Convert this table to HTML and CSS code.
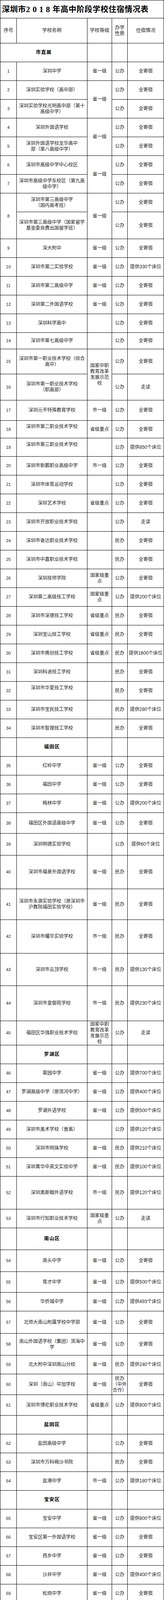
FILE: index.html
```html
<!DOCTYPE html>
<html lang="zh-CN">
<head>
<meta charset="utf-8">
<meta name="viewport" content="width=device-width, initial-scale=1">
<title>深圳市2018年高中阶段学校住宿情况表</title>
<link rel="stylesheet" href="styles.css">
</head>
<body>
<table class="sheet">
<colgroup><col class="c0"><col class="c1"><col class="c2"><col class="c3"><col class="c4"></colgroup>
<tbody>
<tr class="title h46"><td colspan="5">深圳市<span class="yr">2018</span>年高中阶段学校住宿情况表</td></tr>
<tr class="hd h64"><td>序号</td><td>学校名称</td><td>学校等级</td><td class="tp">办学<br>性质</td><td class="ac">住宿情况</td></tr>
<tr class="sec"><td colspan="2">市直属</td><td></td><td></td><td></td></tr>
<tr><td class="n">1</td><td>深圳中学</td><td>省一级</td><td class="tp">公办</td><td class="ac">全寄宿</td></tr>
<tr><td class="n">2</td><td>深圳实验学校（高中部）</td><td rowspan="2">省一级</td><td class="tp">公办</td><td class="ac">全寄宿</td></tr>
<tr><td class="n">3</td><td>深圳实验学校光明高中部（第十<br>高级中学）</td><td class="tp">公办</td><td class="ac">全寄宿</td></tr>
<tr><td class="n">4</td><td>深圳外国语学校</td><td rowspan="2">省一级</td><td class="tp">公办</td><td class="ac">全寄宿</td></tr>
<tr><td class="n">5</td><td>深圳外国语学校龙华高中<br>部（第八高级中学）</td><td class="tp">公办</td><td class="ac">全寄宿</td></tr>
<tr><td class="n">6</td><td>深圳市高级中学中心校区</td><td rowspan="2">省一级</td><td class="tp">公办</td><td class="ac">全寄宿</td></tr>
<tr><td class="n">7</td><td>深圳市高级中学东校区（第九高<br>级中学）</td><td class="tp">公办</td><td class="ac">全寄宿</td></tr>
<tr><td class="n" rowspan="2">8</td><td>深圳市第三高级中学<br>（国内高考班）</td><td rowspan="2">省一级</td><td class="tp">公办</td><td class="ac">全寄宿</td></tr>
<tr class="h69"><td>深圳市第三高级中学（国家留学<br>基金委自费出国留学班）</td><td class="tp">公办</td><td class="ac">全寄宿</td></tr>
<tr><td class="n">9</td><td>深大附中</td><td>省一级</td><td class="tp">公办</td><td class="ac">全寄宿</td></tr>
<tr><td class="n">10</td><td>深圳市第二实验学校</td><td>省一级</td><td class="tp">公办</td><td class="ac">提供330个床位</td></tr>
<tr><td class="n">11</td><td>深圳市第二高级中学</td><td>省一级</td><td class="tp">公办</td><td class="ac">全寄宿</td></tr>
<tr><td class="n">12</td><td>深圳第二外国语学校</td><td>省一级</td><td class="tp">公办</td><td class="ac">全寄宿</td></tr>
<tr><td class="n">13</td><td>深圳科学高中</td><td></td><td class="tp">公办</td><td class="ac">全寄宿</td></tr>
<tr class="h42"><td class="n">14</td><td>深圳市第七高级中学</td><td></td><td class="tp">公办</td><td class="ac">全寄宿</td></tr>
<tr class="h64"><td class="n">15</td><td>深圳市第一职业技术学校（综合<br>高中）</td><td rowspan="2">国家中职教育改革发展示范校</td><td class="tp">公办</td><td class="ac">全寄宿</td></tr>
<tr class="h67"><td class="n">16</td><td>深圳市第一职业技术学校<br>（职高部）</td><td class="tp">公办</td><td class="ac">走读</td></tr>
<tr class="h52"><td class="n">17</td><td>深圳元平特殊教育学校</td><td>市一级</td><td class="tp">公办</td><td class="ac">全寄宿</td></tr>
<tr class="h45"><td class="n">18</td><td class="up">深圳市第二职业技术学校</td><td>省级重点</td><td class="tp">公办</td><td class="ac">全寄宿</td></tr>
<tr class="h47"><td class="n">19</td><td class="up">深圳市第三职业技术学校</td><td></td><td class="tp">公办</td><td class="ac">提供850个床位</td></tr>
<tr><td class="n">20</td><td>深圳市新鹏职业高级中学</td><td>市一级</td><td class="tp">公办</td><td class="ac">全寄宿</td></tr>
<tr><td class="n">21</td><td>深圳市体育运动学校</td><td></td><td class="tp">公办</td><td class="ac">全寄宿</td></tr>
<tr><td class="n">22</td><td>深圳艺术学校</td><td>省级重点</td><td class="tp">公办</td><td class="ac">全寄宿</td></tr>
<tr><td class="n">23</td><td>深圳市开放职业技术学校</td><td></td><td class="tp">公办</td><td class="ac">走读</td></tr>
<tr><td class="n">24</td><td>深圳市奋达职业技术学校</td><td></td><td class="tp">民办</td><td class="ac">全寄宿</td></tr>
<tr><td class="n">25</td><td>深圳市中嘉职业技术学校</td><td></td><td class="tp">民办</td><td class="ac">全寄宿</td></tr>
<tr><td class="n">26</td><td>深圳技师学院</td><td>国家级重点</td><td class="tp">公办</td><td class="ac">全寄宿</td></tr>
<tr><td class="n">27</td><td>深圳第二高级技工学校</td><td>国家级重点</td><td class="tp">公办</td><td class="ac">提供200个床位</td></tr>
<tr><td class="n">28</td><td>深圳市深德技工学校</td><td>省级重点</td><td class="tp">民办</td><td class="ac">全寄宿</td></tr>
<tr><td class="n">29</td><td>深圳宝山技工学校</td><td>省级重点</td><td class="tp">民办</td><td class="ac">全寄宿</td></tr>
<tr><td class="n">30</td><td>深圳市携创技工学校</td><td>省级重点</td><td class="tp">民办</td><td class="ac">提供1600个床位</td></tr>
<tr><td class="n">31</td><td>深圳科迪技工学校</td><td></td><td class="tp">民办</td><td class="ac">全寄宿</td></tr>
<tr><td class="n">32</td><td class="up">深圳市华夏技工学校</td><td></td><td class="tp">民办</td><td class="ac">全寄宿</td></tr>
<tr><td class="n">33</td><td>深圳市宝民技工学校</td><td></td><td class="tp">民办</td><td class="ac">提供280个床位</td></tr>
<tr><td class="n">34</td><td>深圳市智理技工学校</td><td></td><td class="tp">民办</td><td class="ac">全寄宿</td></tr>
<tr class="sec"><td></td><td>福田区</td><td></td><td></td><td></td></tr>
<tr><td class="n">35</td><td>红岭中学</td><td>省一级</td><td class="tp">公办</td><td class="ac">全寄宿</td></tr>
<tr><td class="n">36</td><td>福田中学</td><td>省一级</td><td class="tp">公办</td><td class="ac">全寄宿</td></tr>
<tr><td class="n">37</td><td>梅林中学</td><td>省一级</td><td class="tp">公办</td><td class="ac">提供200个床位</td></tr>
<tr class="h53"><td class="n">38</td><td>福田区外国语高级中学</td><td>省一级</td><td class="tp">公办</td><td class="ac">全寄宿</td></tr>
<tr class="h56"><td class="n">39</td><td>深圳明德实验学校</td><td></td><td class="tp">公办</td><td class="ac">提供60个床位</td></tr>
<tr class="h86"><td class="n">40</td><td>深圳市福景外国语学校</td><td>省一级</td><td class="tp">民办</td><td class="ac">全寄宿</td></tr>
<tr class="h79"><td class="n">41</td><td>深圳市永源实验学校（原深圳市<br>沪教院福田实验学校）</td><td>省一级</td><td class="tp">民办</td><td class="ac">全寄宿</td></tr>
<tr class="h86"><td class="n">42</td><td>深圳市耀华实验学校</td><td>市一级</td><td class="tp">民办</td><td class="ac">全寄宿</td></tr>
<tr class="h83"><td class="n">43</td><td>深圳市云顶学校</td><td>市一级</td><td class="tp">民办</td><td class="ac">提供130个床位</td></tr>
<tr class="h90"><td class="n">44</td><td>深圳市皇御苑学校</td><td>市一级</td><td class="tp">民办</td><td class="ac">提供230个床位</td></tr>
<tr class="h62"><td class="n">45</td><td>福田区华强职业技术学校</td><td>国家中职教育改革发展示范校</td><td class="tp">公办</td><td class="ac">走读</td></tr>
<tr class="sec"><td></td><td>罗湖区</td><td></td><td></td><td></td></tr>
<tr><td class="n">46</td><td>翠园中学</td><td>省一级</td><td class="tp">公办</td><td class="ac">提供700个床位</td></tr>
<tr><td class="n">47</td><td>罗湖高级中学（原滨河中学）</td><td>省一级</td><td class="tp">公办</td><td class="ac">提供400个床位</td></tr>
<tr><td class="n">48</td><td>罗湖外语学校</td><td>省一级</td><td class="tp">公办</td><td class="ac">提供500个床位</td></tr>
<tr><td class="n">49</td><td>深圳市美术学校（普高）</td><td></td><td class="tp">公办</td><td class="ac">提供120个床位</td></tr>
<tr><td class="n">50</td><td>深圳市明珠学校</td><td>省一级</td><td class="tp">民办</td><td class="ac">提供210个床位</td></tr>
<tr><td class="n">51</td><td>深圳菁华中英文实验中学</td><td>省一级</td><td class="tp">民办</td><td class="ac">提供100个床位</td></tr>
<tr class="h84"><td class="n">52</td><td>深圳奥斯翰外语学校</td><td>市一级</td><td class="tp">民办</td><td class="ac">提供120个床位</td></tr>
<tr><td class="n">53</td><td>深圳市行知职业技术学校</td><td>国家级重点</td><td class="tp">公办</td><td class="ac">走读</td></tr>
<tr class="sec h56"><td></td><td>南山区</td><td></td><td></td><td></td></tr>
<tr class="h56"><td class="n">54</td><td>南头中学</td><td>省一级</td><td class="tp">公办</td><td class="ac">全寄宿</td></tr>
<tr class="h53"><td class="n">55</td><td>育才中学</td><td>省一级</td><td class="tp">公办</td><td class="ac">提供500个床位</td></tr>
<tr><td class="n">56</td><td>华侨城中学</td><td>省一级</td><td class="tp">公办</td><td class="ac">提供493个床位</td></tr>
<tr class="h57"><td class="n">57</td><td>北师大南山附属学校中学部</td><td>省一级</td><td class="tp">公办</td><td class="ac">全寄宿</td></tr>
<tr class="h56"><td class="n">58</td><td>南山外国语学校（集团）滨海中<br>学</td><td>省一级</td><td class="tp">公办</td><td class="ac">全寄宿</td></tr>
<tr><td class="n">59</td><td>北大附中深圳南山分校</td><td>省一级</td><td class="tp">民办</td><td class="ac">提供240个床位</td></tr>
<tr class="h53"><td class="n">60</td><td>深圳（南山）中加学校</td><td>省一级</td><td class="tp">民办<br>（中外<br>合作）</td><td class="ac">全寄宿</td></tr>
<tr class="h53"><td class="n">61</td><td>深圳市博伦职业技术学校</td><td>省级重点</td><td class="tp">公办</td><td class="ac">提供800个床位</td></tr>
<tr class="sec"><td></td><td>盐田区</td><td></td><td></td><td></td></tr>
<tr><td class="n">62</td><td>盐田高级中学</td><td></td><td class="tp">公办</td><td class="ac">全寄宿</td></tr>
<tr><td class="n">63</td><td>深圳市万科梅沙书院</td><td></td><td class="tp">民办</td><td class="ac">全寄宿</td></tr>
<tr><td class="n">64</td><td>盐港中学</td><td>市一级</td><td class="tp">公办</td><td class="ac">提供180个床位</td></tr>
<tr class="sec"><td></td><td>宝安区</td><td></td><td></td><td></td></tr>
<tr><td class="n">65</td><td>宝安中学</td><td>省一级</td><td class="tp">公办</td><td class="ac">提供800个床位</td></tr>
<tr><td class="n">66</td><td>宝安区第一外国语学校</td><td>省一级</td><td class="tp">公办</td><td class="ac">全寄宿</td></tr>
<tr><td class="n">67</td><td>西乡中学</td><td>省一级</td><td class="tp">公办</td><td class="ac">全寄宿</td></tr>
<tr><td class="n">68</td><td>沙井中学</td><td>省一级</td><td class="tp">公办</td><td class="ac">提供400个床位</td></tr>
<tr><td class="n">69</td><td>松岗中学</td><td>省一级</td><td class="tp">公办</td><td class="ac">全寄宿</td></tr>
<tr><td class="n">70</td><td>新安中学（集团）高中部</td><td>省一级</td><td class="tp">公办</td><td class="ac">提供750个床位</td></tr>
<tr class="h54"><td class="n">71</td><td>深圳市石岩公学（公办班）</td><td rowspan="2">省一级</td><td class="tp">公办</td><td class="ac">提供250个床位</td></tr>
<tr class="h88"><td class="n">72</td><td>深圳市石岩公学（民办班）</td><td class="tp">民办</td><td class="ac">提供200个床位</td></tr>
<tr class="h54"><td class="n">73</td><td>深圳东方英文书院</td><td>省一级</td><td class="tp">民办</td><td class="ac">全寄宿</td></tr>
<tr class="h87"><td class="n">74</td><td>深圳市崛起实验中学</td><td>市一级</td><td class="tp">民办</td><td class="ac">提供100个床位</td></tr>
<tr class="h88"><td class="n">75</td><td>深圳市桃源居中澳实验学校</td><td>省一级</td><td class="tp">民办</td><td class="ac">全寄宿</td></tr>
<tr class="h59"><td class="n">76</td><td>深圳市华胜实验学校</td><td>市一级</td><td class="tp">民办</td><td class="ac">全寄宿</td></tr>
<tr class="h53"><td class="n">77</td><td>深圳市富源学校</td><td>省一级</td><td class="tp">民办</td><td class="ac">全寄宿</td></tr>
<tr><td class="n">78</td><td>深圳市华侨（康桥）书院</td><td>市一级</td><td class="tp">民办</td><td class="ac">全寄宿</td></tr>
<tr><td class="n">79</td><td>深圳市明德外语实验学校</td><td>市一级</td><td class="tp">民办</td><td class="ac">提供250个床位</td></tr>
<tr><td class="n">80</td><td>深圳市宝安区中英公学</td><td></td><td class="tp">民办</td><td class="ac">全寄宿</td></tr>
<tr><td class="n">81</td><td>深圳市松岗中英文实验学校</td><td></td><td class="tp">民办</td><td class="ac">提供400个床位</td></tr>
<tr class="h87"><td class="n">82</td><td>深圳市宝安区翻身实验学校</td><td></td><td class="tp">民办</td><td class="ac">全寄宿</td></tr>
<tr><td class="n">83</td><td>深圳市华一实验学校</td><td></td><td class="tp">民办</td><td class="ac">全寄宿</td></tr>
<tr class="h65"><td class="n">84</td><td>深圳市宝安职业技术学校</td><td>国家中职教育改革发展示范校</td><td class="tp">公办</td><td class="ac">全寄宿</td></tr>
<tr class="h79"><td class="n">85</td><td>宝安职教集团第二校区（原深圳<br>市沙井职业高级中学）</td><td></td><td class="tp">公办</td><td class="ac">数控专业、模具专业、中德双元制实验班均提供住宿</td></tr>
<tr class="sec"><td></td><td>龙岗区</td><td></td><td></td><td></td></tr>
<tr><td class="n">86</td><td>龙城高级中学</td><td>省一级</td><td class="tp">公办</td><td class="ac">全寄宿</td></tr>
<tr><td class="n">87</td><td>平冈中学</td><td>省一级</td><td class="tp">公办</td><td class="ac">全寄宿</td></tr>
<tr><td class="n">88</td><td>布吉高级中学</td><td>省一级</td><td class="tp">公办</td><td class="ac">全寄宿</td></tr>
<tr><td class="n">89</td><td>布吉中学</td><td>省一级</td><td class="tp">公办</td><td class="ac">走读</td></tr>
<tr><td class="n">90</td><td>横岗高级中学</td><td>省一级</td><td class="tp">公办</td><td class="ac">全寄宿</td></tr>
<tr><td class="n">91</td><td>平湖外国语学校</td><td>省一级</td><td class="tp">公办</td><td class="ac">全寄宿</td></tr>
<tr><td class="n">92</td><td>华中师范大学龙岗附属中学</td><td>市一级</td><td class="tp">公办</td><td class="ac">全寄宿</td></tr>
<tr class="h84"><td class="n">93</td><td>深圳市龙岗区东升学校</td><td>省一级</td><td class="tp">民办</td><td class="ac">全寄宿</td></tr>
<tr><td class="n">94</td><td>深圳市建文外国语学校</td><td>省一级</td><td class="tp">民办</td><td class="ac">全寄宿</td></tr>
<tr><td class="n">95</td><td>深圳市龙岗区科城实验学校</td><td></td><td class="tp">民办</td><td class="ac">走读</td></tr>
<tr class="h57"><td class="n">96</td><td>深圳实验承翰学校</td><td></td><td class="tp">民办</td><td class="ac">提供360个床位</td></tr>
<tr><td class="n">97</td><td>深圳市德邦高级中学</td><td></td><td class="tp">民办</td><td class="ac">全寄宿</td></tr>
<tr><td class="n">98</td><td>深圳市珊蒂泉外国语学校</td><td></td><td class="tp">民办</td><td class="ac">全寄宿</td></tr>
<tr><td class="n">99</td><td>深圳市伊思顿龙岗书院</td><td></td><td class="tp">民办</td><td class="ac">全寄宿</td></tr>
<tr><td class="n">100</td><td>深圳市龙岗职业技术学校</td><td>国家级重点</td><td class="tp">公办</td><td class="ac">提供800个床位</td></tr>
<tr><td class="n">101</td><td>龙岗第二职业技术学校</td><td></td><td class="tp">公办</td><td class="ac">全寄宿</td></tr>
<tr class="sec"><td></td><td>光明新区</td><td></td><td></td><td></td></tr>
<tr><td class="n">102</td><td>光明新区高级中学</td><td>省一级</td><td class="tp">公办</td><td class="ac">全寄宿</td></tr>
<tr><td class="n">103</td><td>光明中学</td><td>省一级</td><td class="tp">公办</td><td class="ac">提供400个床位</td></tr>
<tr><td class="n">104</td><td>深圳市光明书院</td><td></td><td class="tp">民办</td><td class="ac">全寄宿</td></tr>
<tr class="sec"><td></td><td>大鹏新区</td><td></td><td></td><td></td></tr>
<tr><td class="n">105</td><td>人大附中深圳学校</td><td></td><td class="tp">公办</td><td class="ac">全寄宿</td></tr>
<tr class="sec"><td></td><td>坪山区</td><td></td><td></td><td></td></tr>
<tr><td class="n">106</td><td>坪山高级中学</td><td>省一级</td><td class="tp">公办</td><td class="ac">全寄宿</td></tr>
<tr><td class="n">107</td><td>深圳市龙翔学校</td><td></td><td class="tp">民办</td><td class="ac">全寄宿</td></tr>
<tr class="sec"><td></td><td>龙华区</td><td></td><td></td><td></td></tr>
<tr><td class="n">108</td><td>龙华中学</td><td>省一级</td><td class="tp">公办</td><td class="ac">提供180个床位</td></tr>
<tr><td class="n">109</td><td>观澜中学</td><td>省一级</td><td class="tp">公办</td><td class="ac">提供200个床位</td></tr>
<tr><td class="n">110</td><td>龙华高级中学</td><td></td><td class="tp">公办</td><td class="ac">全寄宿</td></tr>
<tr><td class="n">111</td><td>深圳市龙华中英文实验学校</td><td></td><td class="tp">民办</td><td class="ac">全寄宿</td></tr>
<tr><td class="n">112</td><td>深圳市美中学校</td><td></td><td class="tp">民办</td><td class="ac">提供200个床位</td></tr>
<tr><td class="n">113</td><td>深圳市展华实验学校</td><td></td><td class="tp">民办</td><td class="ac">提供150个床位</td></tr>
<tr><td class="n">114</td><td>深圳市厚德书院</td><td></td><td class="tp">民办</td><td class="ac">全寄宿</td></tr>
<tr><td class="n">115</td><td>深圳市格睿特高级中学</td><td></td><td class="tp">民办</td><td class="ac">提供200个床位</td></tr>
</tbody>
</table>
</body>
</html>
```

FILE: styles.css
```css
html {
  -webkit-text-size-adjust: 100%;
  text-size-adjust: 100%;
}

html, body {
  margin: 0;
  padding: 0;
  background: #fff;
}

body {
  font-family: "Liberation Sans", "Noto Sans CJK SC", sans-serif;
  color: #222;
}

.sheet {
  width: 419px;
  border-collapse: collapse;
  table-layout: fixed;
}

.c0 { width: 42px; }
.c1 { width: 181px; }
.c2 { width: 63px; }
.c3 { width: 40px; }
.c4 { width: 93px; }

.sheet tr { height: 48px; }

.sheet td {
  border: 1px solid #000;
  padding: 0 4px;
  text-align: center;
  vertical-align: middle;
  font-size: 12px;
  line-height: 15px;
}

.sheet td.tp {
  padding: 0;
  white-space: nowrap;
}

.sheet td.ac {
  padding: 0 2px;
}

.sheet td.n {
  font-size: 11px;
}

.sheet td.up {
  padding-bottom: 14px;
}

.title td {
  text-align: left;
  padding: 2px 0 0 4px;
  font-family: "Liberation Serif", "Noto Sans CJK SC", serif;
  font-size: 20px;
  font-weight: 700;
  letter-spacing: 0.5px;
  color: #000;
}

.title .yr {
  font-size: 21px;
  letter-spacing: 6.5px;
}

.hd td {
  font-size: 12.5px;
}

.sec td {
  font-size: 12.5px;
  font-weight: 700;
  letter-spacing: 1px;
  color: #000;
}

.sheet tr.h42 { height: 42px; }
.sheet tr.h45 { height: 45px; }
.sheet tr.h46 { height: 46px; }
.sheet tr.h47 { height: 47px; }
.sheet tr.h52 { height: 52px; }
.sheet tr.h53 { height: 53px; }
.sheet tr.h54 { height: 54px; }
.sheet tr.h56 { height: 56px; }
.sheet tr.h57 { height: 57px; }
.sheet tr.h59 { height: 59px; }
.sheet tr.h62 { height: 62px; }
.sheet tr.h64 { height: 64px; }
.sheet tr.h65 { height: 65px; }
.sheet tr.h67 { height: 67px; }
.sheet tr.h69 { height: 69px; }
.sheet tr.h79 { height: 79px; }
.sheet tr.h83 { height: 83px; }
.sheet tr.h84 { height: 84px; }
.sheet tr.h86 { height: 86px; }
.sheet tr.h87 { height: 87px; }
.sheet tr.h88 { height: 88px; }
.sheet tr.h90 { height: 90px; }
```
